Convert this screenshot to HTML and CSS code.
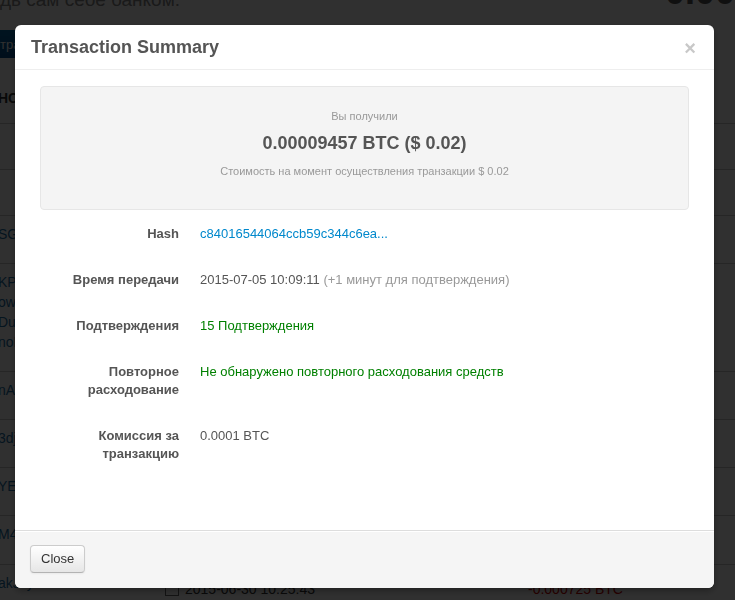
FILE: index.html
```html
<!DOCTYPE html>
<html lang="ru">
<head>
<meta charset="utf-8">
<title>Transaction Summary</title>
<link rel="stylesheet" href="styles.css">
</head>
<body>
<div class="page">
  <div class="hero">
    <span class="tagline">дь сам себе банком.</span>
    <span class="balance">0.00009457 BTC</span>
  </div>
  <div class="toolbar">
    <button class="btn-primary">Все транзакции</button>
  </div>
  <table class="tx">
    <colgroup><col class="c1"><col class="c2"><col class="c3"></colgroup>
    <thead>
      <tr><th>НСД</th><th></th><th></th></tr>
    </thead>
    <tbody>
      <tr class="short"><td>&nbsp;</td><td></td><td></td></tr>
      <tr class="short"><td>&nbsp;</td><td></td><td></td></tr>
      <tr><td><a>SGx7pQkA</a></td><td></td><td></td></tr>
      <tr><td><a>KPa9Lm2e</a><br><a>owfT3xQd</a><br><a>Du8vYc1r</a><br><a>noFq5Wb7</a></td><td></td><td></td></tr>
      <tr><td><a>nAx2KfR8</a></td><td></td><td></td></tr>
      <tr><td><a>3dj7UeWq</a></td><td></td><td></td></tr>
      <tr><td><a>YEr4nP0s</a></td><td></td><td></td></tr>
      <tr class="tall"><td><a>M4cZ8hTy</a></td><td></td><td></td></tr>
      <tr><td><a>akJcyJm</a></td><td class="date"><span class="cal"></span>2015-06-30 10:25:43</td><td class="neg">-0.000725 BTC</td></tr>
    </tbody>
  </table>
</div>

<div class="backdrop"></div>

<div class="modal">
  <div class="modal-header">
    <h3 class="modal-title">Transaction Summary</h3>
    <span class="close">×</span>
  </div>
  <div class="modal-body">
    <div class="well">
      <div class="well-label">Вы получили</div>
      <div class="well-amount">0.00009457 BTC ($ 0.02)</div>
      <div class="well-note">Стоимость на момент осуществления транзакции $ 0.02</div>
    </div>
    <div class="row">
      <div class="label">Hash</div>
      <div class="value"><a class="link">c84016544064ccb59c344c6ea...</a></div>
    </div>
    <div class="row">
      <div class="label">Время передачи</div>
      <div class="value">2015-07-05 10:09:11 <span class="muted">(+1 минут для подтверждения)</span></div>
    </div>
    <div class="row">
      <div class="label">Подтверждения</div>
      <div class="value ok">15 Подтверждения</div>
    </div>
    <div class="row">
      <div class="label">Повторное расходование</div>
      <div class="value ok">Не обнаружено повторного расходования средств</div>
    </div>
    <div class="row">
      <div class="label">Комиссия за транзакцию</div>
      <div class="value">0.0001 BTC</div>
    </div>
  </div>
  <div class="modal-footer">
    <button class="btn">Close</button>
  </div>
</div>
</body>
</html>
```

FILE: styles.css
```css
html, body {
  margin: 0;
  padding: 0;
  overflow: hidden;
  height: 100%;
}
body {
  background: #ffffff;
  font-family: "Liberation Sans", Arial, sans-serif;
  color: #333;
}

/* background page */
.page {
  margin-top: -14px;
}
.hero {
  display: grid;
  grid-template-columns: 1fr 70px;
  height: 28px;
}
.tagline {
  font-size: 19px;
  line-height: 28px;
  color: #888;
  white-space: nowrap;
}
.balance {
  font-size: 36px;
  font-weight: bold;
  line-height: 40px;
  margin-top: -14px;
  color: #555;
  white-space: nowrap;
  overflow: hidden;
}
.toolbar {
  margin-top: 16px;
  margin-left: -70px;
}
.btn-primary {
  height: 28px;
  width: 130px;
  border: 0;
  border-radius: 4px;
  background: linear-gradient(#006aa6, #004a90);
  color: #fff;
  font: 13px "Liberation Sans", Arial, sans-serif;
  padding: 0 0 0 44px;
  text-align: left;
  white-space: nowrap;
}
.tx {
  margin-top: 12px;
  margin-left: -2px;
  border-collapse: collapse;
  table-layout: fixed;
  width: 760px;
  font-size: 14px;
}
.tx .c1 { width: 167px; }
.tx .c2 { width: 363px; }
.tx th {
  text-align: left;
  padding: 18px 0 15px;
  line-height: 20px;
  color: #333;
}
.tx td {
  border-top: 1px solid #c8c8c8;
  padding: 8px 0 19px;
  line-height: 20px;
  vertical-align: top;
}
.tx tr.short td {
  padding-bottom: 17px;
}
.tx tr.tall td {
  padding-bottom: 20px;
}
.tx a {
  color: #1d6fa5;
}
.tx td.date {
  padding-top: 14px;
  color: #333;
}
.tx td.neg {
  padding-top: 14px;
  color: #c00;
}
.cal {
  display: inline-block;
  width: 14px;
  height: 12px;
  border: 1px solid #666;
  border-top-width: 3px;
  margin-right: 6px;
  vertical-align: -2px;
  box-sizing: border-box;
}

.backdrop {
  position: fixed;
  inset: 0;
  background: rgba(0, 0, 0, 0.81);
}

/* modal */
.modal {
  position: fixed;
  top: 25px;
  left: 15px;
  width: 699px;
  background: #fff;
  border-radius: 6px;
  box-shadow: 0 3px 7px rgba(0, 0, 0, 0.3);
  overflow: hidden;
}
.modal-header {
  display: flex;
  justify-content: space-between;
  align-items: center;
  padding: 9px 18px 8px 16px;
  border-bottom: 1px solid #eee;
}
.modal-title {
  margin: 0;
  font-size: 18px;
  line-height: 27px;
  font-weight: bold;
  color: #555;
}
.close {
  font-size: 20px;
  font-weight: bold;
  line-height: 20px;
  color: #c8c8c8;
}
.modal-body {
  padding: 16px 25px 39px;
  font-size: 13px;
  line-height: 18px;
}
.well {
  background: #f4f4f4;
  border: 1px solid #e6e6e6;
  border-radius: 4px;
  padding: 20px 19px 29px;
  margin-bottom: 15px;
  text-align: center;
}
.well-label, .well-note {
  font-size: 11px;
  line-height: 18px;
  color: #999;
}
.well-amount {
  margin-top: 6px;
  font-size: 18px;
  line-height: 24px;
  font-weight: bold;
  color: #555;
}
.well-note {
  margin-top: 7px;
}
.row {
  display: grid;
  grid-template-columns: 139px 1fr;
  column-gap: 21px;
  margin-bottom: 28px;
}
.label {
  text-align: right;
  font-weight: bold;
  color: #555;
}
.value {
  color: #555;
}
.muted {
  color: #999;
}
.ok {
  color: #008000;
}
.link {
  color: #0088cc;
  text-decoration: none;
}
.modal-footer {
  background: #f5f5f5;
  border-top: 1px solid #ddd;
  padding: 14px 15px 15px;
  box-shadow: inset 0 1px 0 #fff;
}
.btn {
  font: 13px/18px "Liberation Sans", Arial, sans-serif;
  color: #333;
  padding: 4px 10px;
  border: 1px solid #ccc;
  border-bottom-color: #b3b3b3;
  border-radius: 4px;
  background: linear-gradient(#ffffff, #e6e6e6);
  box-shadow: inset 0 1px 0 rgba(255,255,255,.2), 0 1px 2px rgba(0,0,0,.05);
}
```
